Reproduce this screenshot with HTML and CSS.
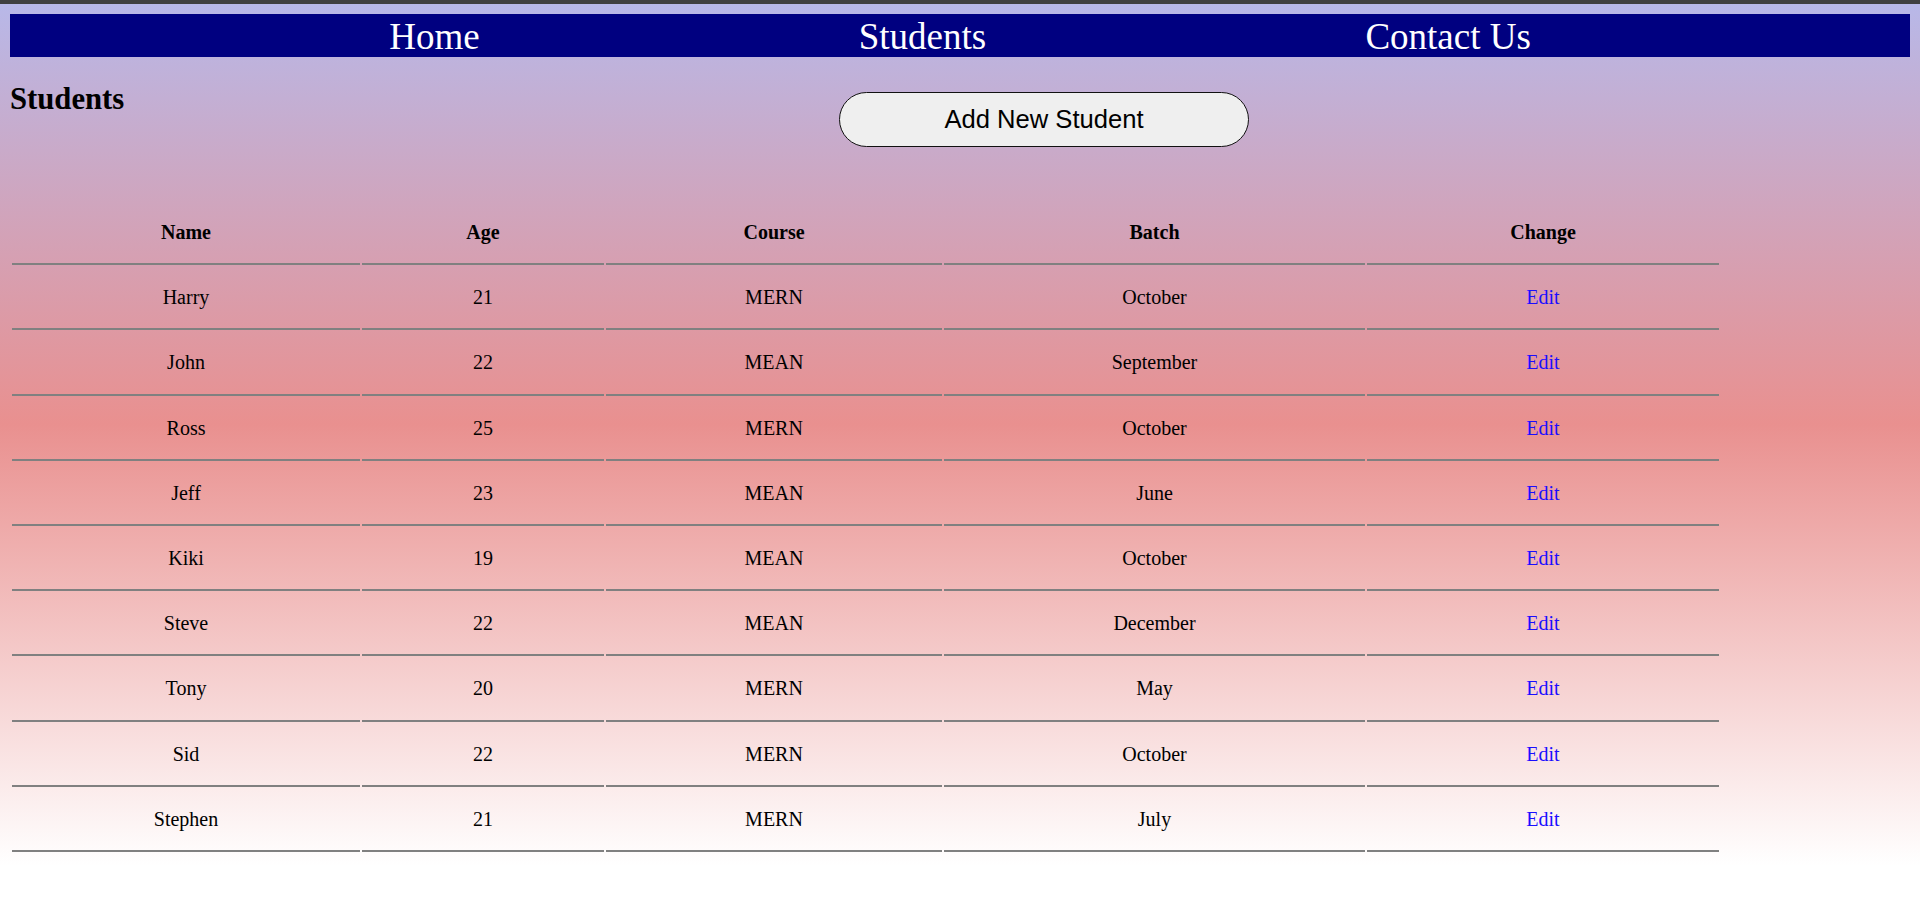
FILE: index.html
```html
<!DOCTYPE html>
<html lang="en">
<head>
<meta charset="utf-8">
<title>Students</title>
<link rel="stylesheet" href="styles.css">
</head>
<body>
  <nav class="nav">
    <a class="nav-link" href="#">Home</a>
    <a class="nav-link" href="#">Students</a>
    <a class="nav-link" href="#">Contact Us</a>
  </nav>

  <div class="toolbar">
    <h1 class="title">Students</h1>
    <button class="add-btn" type="button">Add New Student</button>
  </div>

  <table class="students">
    <colgroup>
      <col class="col-name">
      <col class="col-age">
      <col class="col-course">
      <col class="col-batch">
      <col class="col-change">
    </colgroup>
    <thead>
      <tr><th>Name</th><th>Age</th><th>Course</th><th>Batch</th><th>Change</th></tr>
    </thead>
    <tbody>
      <tr><td>Harry</td><td>21</td><td>MERN</td><td>October</td><td><a class="edit" href="#">Edit</a></td></tr>
      <tr><td>John</td><td>22</td><td>MEAN</td><td>September</td><td><a class="edit" href="#">Edit</a></td></tr>
      <tr><td>Ross</td><td>25</td><td>MERN</td><td>October</td><td><a class="edit" href="#">Edit</a></td></tr>
      <tr><td>Jeff</td><td>23</td><td>MEAN</td><td>June</td><td><a class="edit" href="#">Edit</a></td></tr>
      <tr><td>Kiki</td><td>19</td><td>MEAN</td><td>October</td><td><a class="edit" href="#">Edit</a></td></tr>
      <tr><td>Steve</td><td>22</td><td>MEAN</td><td>December</td><td><a class="edit" href="#">Edit</a></td></tr>
      <tr><td>Tony</td><td>20</td><td>MERN</td><td>May</td><td><a class="edit" href="#">Edit</a></td></tr>
      <tr><td>Sid</td><td>22</td><td>MERN</td><td>October</td><td><a class="edit" href="#">Edit</a></td></tr>
      <tr><td>Stephen</td><td>21</td><td>MERN</td><td>July</td><td><a class="edit" href="#">Edit</a></td></tr>
    </tbody>
  </table>
</body>
</html>
```

FILE: styles.css
```css
html {
  border-top: 4px solid #404040;
  background: #ffffff linear-gradient(to bottom, #b8b8e8 0px, #e9908f 420px, #ffffff 862px) no-repeat;
  background-size: 100% 862px;
  min-height: 100%;
}

body {
  margin: 10px;
  font-family: "Liberation Serif", "Times New Roman", serif;
  color: #000;
}

.nav {
  display: flex;
  justify-content: space-evenly;
  align-items: center;
  height: 43px;
  background: #000080;
}

.nav-link {
  color: #fff;
  text-decoration: none;
  font-size: 37px;
  padding-top: 2px;
}

.toolbar {
  display: grid;
  grid-template-columns: 829px 410px;
  align-items: start;
}

.title {
  margin: 24.5px 0 10px;
  font-size: 30.7px;
  font-weight: bold;
}

.add-btn {
  margin-top: 35px;
  width: 410px;
  height: 55px;
  border: 1px solid #111;
  border-radius: 28px;
  background: #efefef;
  font-family: "Liberation Sans", Arial, sans-serif;
  font-size: 25.6px;
  color: #000;
  padding: 0;
}

.students {
  margin-top: 53px;
  border-spacing: 2px;
  font-size: 20px;
}

.col-name { width: 348px; }
.col-age { width: 242px; }
.col-course { width: 336px; }
.col-batch { width: 421px; }
.col-change { width: 352px; }

.students th,
.students td {
  padding: 19.1px 0;
  text-align: center;
  border-bottom: 2px solid #808080;
}

.students th {
  font-weight: bold;
}

.edit {
  color: #1a0dff;
  text-decoration: none;
}
```
